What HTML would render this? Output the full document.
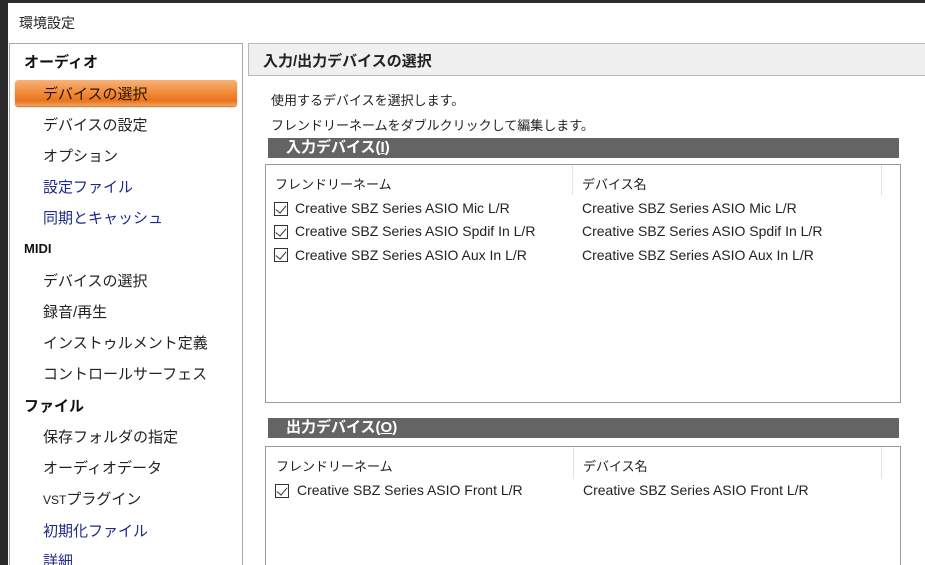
<!DOCTYPE html>
<html><head><meta charset="utf-8"><style>
*{margin:0;padding:0;box-sizing:border-box}
html,body{width:925px;height:565px;overflow:hidden}
body{background:#fff;position:relative;font-family:"Liberation Sans","Noto Sans CJK JP",sans-serif;color:#222}
.a{position:absolute;white-space:nowrap}
.left{position:absolute;left:9px;top:43px;width:234px;height:530px;border:1px solid #a8a8a8;background:#fff}
.it{position:absolute;left:43px;font-size:15px;color:#222}
.bl{color:#1e2a8a}
.hd{position:absolute;left:24px;font-size:15px;font-weight:bold;color:#111}
.sel{position:absolute;left:15px;top:80px;width:222px;height:26px;border-radius:3px;background:linear-gradient(#f7b27a,#f08a38 50%,#e7741e 80%,#f6a35e);box-shadow:0 1px 1px #c86a20}
.rh{position:absolute;left:248px;top:43px;width:680px;height:33px;background:#f0f0f0;border:1px solid #b9b9b9;font-weight:bold;font-size:15px;padding:6px 0 0 14px}
.bar{position:absolute;left:268px;width:631px;height:20px;background:#646464;color:#fff;font-weight:bold;font-size:15px;padding:0 0 0 18px;line-height:20px}
.box{position:absolute;left:265px;width:636px;border:1px solid #9a9a9a;background:#fff}
.t{font-size:14px}
.cb{position:absolute;width:14px;height:14px;border:1px solid #333;background:#fff}
.cb:after{content:"";position:absolute;left:3px;top:0px;width:5px;height:9px;border-right:1.5px solid #333;border-bottom:1.5px solid #333;transform:rotate(40deg)}
.sep{position:absolute;width:1px;background:#e3e3e3}
</style></head><body>
<div style="position:absolute;left:0;top:0;width:925px;height:3px;background:#2b2b2b"></div>
<div style="position:absolute;left:0;top:0;width:8px;height:565px;background:#2b2b2b"></div>
<div class="a" style="left:19px;top:13px;font-size:14px">環境設定</div>
<div class="left"></div>
<div class="hd" style="top:51px">オーディオ</div>
<div class="sel"></div>
<div class="it" style="top:83px;color:#2a1500">デバイスの選択</div>
<div class="it" style="top:114px">デバイスの設定</div>
<div class="it" style="top:145px">オプション</div>
<div class="it bl" style="top:176px">設定ファイル</div>
<div class="it bl" style="top:207px">同期とキャッシュ</div>
<div class="hd" style="top:241px;font-size:13px">MIDI</div>
<div class="it" style="top:270px">デバイスの選択</div>
<div class="it" style="top:301px">録音/再生</div>
<div class="it" style="top:332px">インストゥルメント定義</div>
<div class="it" style="top:363px">コントロールサーフェス</div>
<div class="hd" style="top:395px">ファイル</div>
<div class="it" style="top:426px">保存フォルダの指定</div>
<div class="it" style="top:457px">オーディオデータ</div>
<div class="it" style="top:488px"><span style="font-size:12px">VST</span>プラグイン</div>
<div class="it bl" style="top:520px">初期化ファイル</div>
<div class="it bl" style="top:550px">詳細</div>

<div class="rh">入力/出力デバイスの選択</div>
<div class="a t" style="left:271px;top:90px;font-size:13px">使用するデバイスを選択します。</div>
<div class="a t" style="left:271px;top:115px;font-size:13px">フレンドリーネームをダブルクリックして編集します。</div>

<div class="bar" style="top:138px">入力デバイス(<u>I</u>)</div>
<div class="box" style="top:164px;height:239px">
<div class="sep" style="left:306px;top:0;height:30px"></div>
<div class="sep" style="left:615px;top:0;height:30px"></div>
<div class="a" style="left:9px;top:9px;font-size:13px">フレンドリーネーム</div>
<div class="a" style="left:316px;top:9px;font-size:13px">デバイス名</div>
<div class="cb" style="left:8px;top:37px"></div><div class="a t" style="left:29px;top:35px">Creative SBZ Series ASIO Mic L/R</div><div class="a t" style="left:316px;top:35px">Creative SBZ Series ASIO Mic L/R</div>
<div class="cb" style="left:8px;top:60px"></div><div class="a t" style="left:29px;top:58px">Creative SBZ Series ASIO Spdif In L/R</div><div class="a t" style="left:316px;top:58px">Creative SBZ Series ASIO Spdif In L/R</div>
<div class="cb" style="left:8px;top:83px"></div><div class="a t" style="left:29px;top:82px">Creative SBZ Series ASIO Aux In L/R</div><div class="a t" style="left:316px;top:82px">Creative SBZ Series ASIO Aux In L/R</div>
</div>

<div class="bar" style="top:418px">出力デバイス(<u>O</u>)</div>
<div class="box" style="top:446px;height:130px">
<div class="sep" style="left:307px;top:0;height:32px"></div>
<div class="sep" style="left:615px;top:0;height:32px"></div>
<div class="a" style="left:10px;top:9px;font-size:13px">フレンドリーネーム</div>
<div class="a" style="left:317px;top:9px;font-size:13px">デバイス名</div>
<div class="cb" style="left:9px;top:37px"></div><div class="a t" style="left:31px;top:35px">Creative SBZ Series ASIO Front L/R</div><div class="a t" style="left:317px;top:35px">Creative SBZ Series ASIO Front L/R</div>
</div>
</body></html>
